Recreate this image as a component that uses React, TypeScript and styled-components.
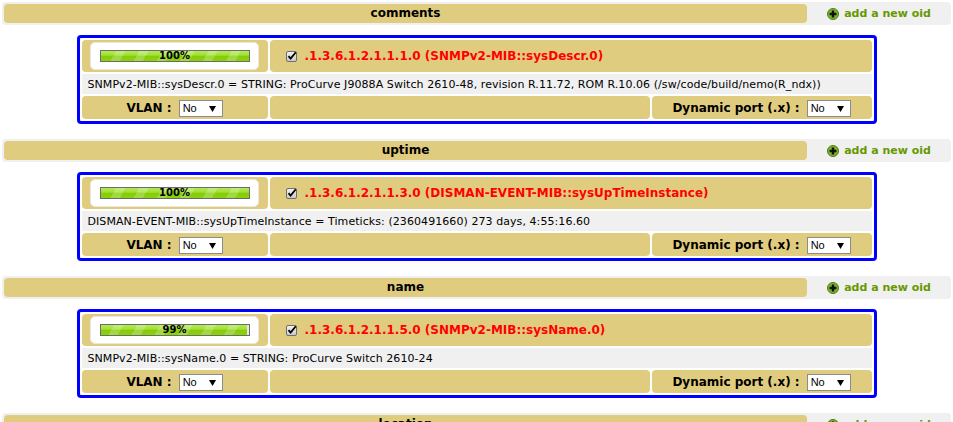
import React from "react";
import styled, { createGlobalStyle } from "styled-components";

const GlobalStyle = createGlobalStyle`
  html, body { margin: 0; padding: 0; background: #ffffff; }
  body { font-family: "DejaVu Sans", Verdana, sans-serif; color: #000; }
`;

const TAN = "#e0cc7e";
const GREY = "#f0f0f0";

const Page = styled.div`
  padding: 2px 2px 0 2px;
  display: flex;
  flex-direction: column;
`;

const Section = styled.section`
  display: flex;
  flex-direction: column;
  margin-bottom: 15px;
`;

const HeaderBar = styled.div`
  display: grid;
  grid-template-columns: 803px 1fr;
  background: ${GREY};
  border-radius: 4px;
  padding: 2px;
`;

const Title = styled.div`
  background: ${TAN};
  border-radius: 4px;
  height: 19px;
  line-height: 19px;
  text-align: center;
  font-weight: bold;
  font-size: 12px;
`;

const AddLink = styled.a`
  display: flex;
  align-items: center;
  justify-content: center;
  gap: 5px;
  color: #669900;
  font-weight: bold;
  font-size: 11px;
  text-decoration: none;
  padding-left: 2px;
`;

const Box = styled.div`
  box-sizing: border-box;
  width: 800px;
  margin: 10px auto 0 auto;
  border: 3px solid #0000ff;
  border-radius: 4px;
  padding: 2px;
  display: grid;
  grid-template-columns: 186px 380px 220px;
  grid-template-rows: 32px 20px 23px;
  gap: 2px;
  background: #fff;
`;

const Cell = styled.div<{ $span?: number }>`
  background: ${TAN};
  border-radius: 4px;
  grid-column: span ${(p) => p.$span ?? 1};
  display: flex;
  align-items: center;
`;

const ProgressCell = styled(Cell)`
  padding: 2px 9px 2px 8px;
  box-sizing: border-box;
`;

const ProgressFrame = styled.div`
  flex: 1;
  align-self: stretch;
  background: #fff;
  border-radius: 5px;
  border: 1px solid #ece8dc;
  display: flex;
  align-items: center;
  padding-left: 9px;
`;

const Track = styled.div`
  position: relative;
  box-sizing: border-box;
  width: 150px;
  height: 12px;
  border: 1px solid #6b6b6b;
  background: #e8e8e8;
`;

const Fill = styled.div`
  height: 100%;
  background:
    repeating-linear-gradient(
      -60deg,
      rgba(255, 255, 255, 0) 0px,
      rgba(255, 255, 255, 0) 12px,
      rgba(255, 255, 255, 0.22) 12px,
      rgba(255, 255, 255, 0.22) 20px
    ),
    linear-gradient(to bottom, #b4ea52 0%, #a3e03a 40%, #86cc08 55%, #8bd10c 100%);
`;

const TrackLabel = styled.span`
  position: absolute;
  inset: 0;
  display: flex;
  align-items: center;
  justify-content: center;
  font-weight: bold;
  font-size: 10px;
  line-height: 10px;
  color: #000;
`;

const OidCell = styled(Cell)`
  padding-left: 16px;
  gap: 8px;
`;

const OidText = styled.span`
  color: #ff0000;
  font-weight: bold;
  font-size: 12px;
`;

const DataRow = styled.div`
  grid-column: span 3;
  background: ${GREY};
  display: flex;
  align-items: center;
  padding-left: 6px;
  font-size: 11px;
  letter-spacing: 0.07px;
  white-space: nowrap;
  overflow: hidden;
`;

const FieldCell = styled(Cell)`
  justify-content: center;
  gap: 7px;
  padding-top: 1px;
`;

const FieldLabel = styled.span`
  font-weight: bold;
  font-size: 12px;
`;

const Select = styled.div`
  box-sizing: border-box;
  width: 44px;
  height: 17px;
  border: 1px solid #8c8c8c;
  background: #fff;
  display: flex;
  align-items: center;
  justify-content: space-between;
  padding: 0 6px 0 3px;
  font-family: "Liberation Sans", Arial, sans-serif;
  font-size: 11px;
`;

const CheckIcon = () => (
  <svg width="11" height="11" viewBox="0 0 11 11">
    <defs>
      <linearGradient id="cbg" x1="0" y1="0" x2="0" y2="1">
        <stop offset="0" stopColor="#f4f4f4" />
        <stop offset="1" stopColor="#c8c8c8" />
      </linearGradient>
    </defs>
    <rect x="0.5" y="0.5" width="10" height="10" rx="1.5" fill="url(#cbg)" stroke="#6e6e6e" />
    <path d="M2.5 5.2 L4.6 7.6 L9.8 1.2" fill="none" stroke="#000" strokeWidth="1.8" />
  </svg>
);

const PlusIcon = () => (
  <svg width="12" height="12" viewBox="0 0 12 12">
    <circle cx="6" cy="6" r="5.5" fill="#7bb32a" stroke="#4e7c14" strokeWidth="1" />
    <path d="M6 2.6 V9.4 M2.6 6 H9.4" stroke="#111" strokeWidth="2.4" />
  </svg>
);

const Triangle = () => (
  <svg width="7" height="7" viewBox="0 0 7 7">
    <path d="M0 1 H7 L3.5 7 Z" fill="#000" />
  </svg>
);

type Entry = {
  title: string;
  pct: number;
  oid: string;
  value: string;
};

const entries: Entry[] = [
  {
    title: "comments",
    pct: 100,
    oid: ".1.3.6.1.2.1.1.1.0 (SNMPv2-MIB::sysDescr.0)",
    value:
      "SNMPv2-MIB::sysDescr.0 = STRING: ProCurve J9088A Switch 2610-48, revision R.11.72, ROM R.10.06 (/sw/code/build/nemo(R_ndx))",
  },
  {
    title: "uptime",
    pct: 100,
    oid: ".1.3.6.1.2.1.1.3.0 (DISMAN-EVENT-MIB::sysUpTimeInstance)",
    value:
      "DISMAN-EVENT-MIB::sysUpTimeInstance = Timeticks: (2360491660) 273 days, 4:55:16.60",
  },
  {
    title: "name",
    pct: 99,
    oid: ".1.3.6.1.2.1.1.5.0 (SNMPv2-MIB::sysName.0)",
    value: "SNMPv2-MIB::sysName.0 = STRING: ProCurve Switch 2610-24",
  },
  {
    title: "location",
    pct: 100,
    oid: ".1.3.6.1.2.1.1.6.0 (SNMPv2-MIB::sysLocation.0)",
    value: "SNMPv2-MIB::sysLocation.0 = STRING: ",
  },
];

const Header = ({ title }: { title: string }) => (
  <HeaderBar>
    <Title>{title}</Title>
    <AddLink href="#">
      <PlusIcon />
      add a new oid
    </AddLink>
  </HeaderBar>
);

const Dropdown = () => (
  <Select>
    <span>No</span>
    <Triangle />
  </Select>
);

export default function App() {
  return (
    <>
      <GlobalStyle />
      <Page>
        {entries.map((e) => (
          <Section key={e.title}>
            <Header title={e.title} />
            <Box>
              <ProgressCell>
                <ProgressFrame>
                  <Track>
                    <Fill style={{ width: `${e.pct}%` }} />
                    <TrackLabel>{e.pct}%</TrackLabel>
                  </Track>
                </ProgressFrame>
              </ProgressCell>
              <OidCell $span={2}>
                <CheckIcon />
                <OidText>{e.oid}</OidText>
              </OidCell>
              <DataRow>{e.value}</DataRow>
              <FieldCell>
                <FieldLabel>VLAN :</FieldLabel>
                <Dropdown />
              </FieldCell>
              <Cell />
              <FieldCell>
                <FieldLabel>Dynamic port (.x) :</FieldLabel>
                <Dropdown />
              </FieldCell>
            </Box>
          </Section>
        ))}
      </Page>
    </>
  );
}
